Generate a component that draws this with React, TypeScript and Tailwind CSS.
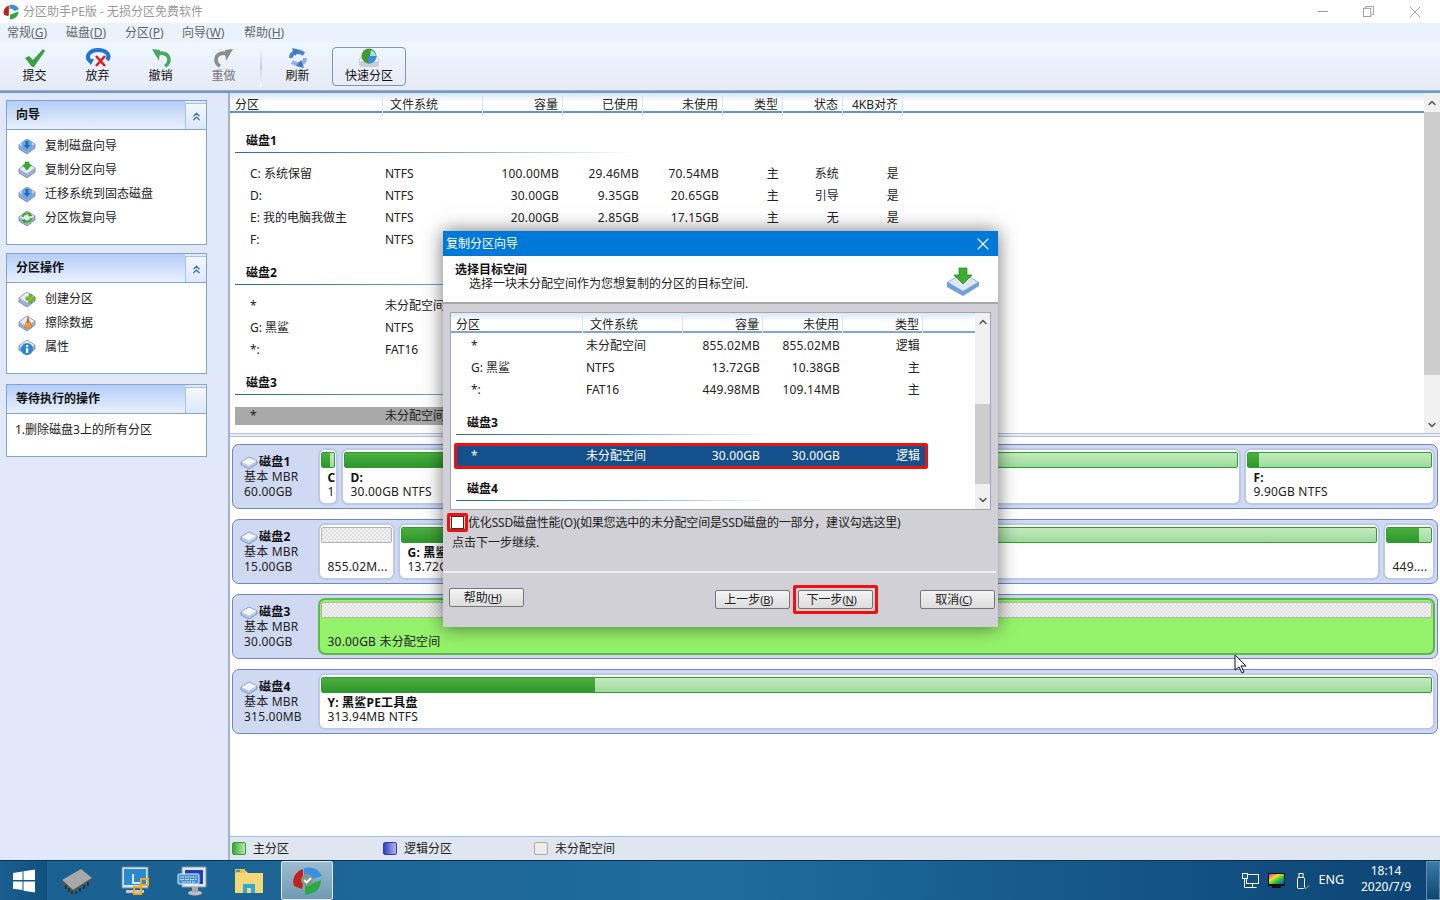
import { ChevronDown, ChevronUp, ChevronsUp, X } from 'lucide-react';
import type { ReactNode } from 'react';

const LIST_COLS = 'grid grid-cols-[148px_100px_80px_80px_80px_60px_60px_60px]';
const DLG_COLS = 'grid grid-cols-[132px_100px_80px_80px_80px]';

const MENU = [
  ['常规', 'G', 'w-[59px]'],
  ['磁盘', 'D', 'w-[59px]'],
  ['分区', 'P', 'w-[57px]'],
  ['向导', 'W', 'w-[62px]'],
  ['帮助', 'H', 'w-[60px]'],
];

function IsoDisk({ children, blue }: { children?: ReactNode; blue?: boolean }) {
  return (
    <svg width="18" height="18" viewBox="0 0 18 18">
      <path d="M1 8 9 2l8 5v4l-8 6-8-5z" fill={blue ? '#8fa8d8' : '#9fb0d0'} stroke="#6f86b8" strokeWidth="0.8" />
      <path d="M1.5 8 9 2.6 16.5 7 9 12.6z" fill="#e8eef8" />
      {children}
    </svg>
  );
}

function DiskDown() {
  return (
    <IsoDisk blue>
      <circle cx="9" cy="8" r="5.5" fill="#6fa8e0" />
      <path d="M7.5 4h3v4h2L9 12 5.5 8h2z" fill="#1f6fc0" />
    </IsoDisk>
  );
}

function DiskGreenArrow() {
  return (
    <IsoDisk>
      <path d="M7 1h4v3h2.5L9 9 4.5 4H7z" fill="#3fae2f" stroke="#1f7f1f" strokeWidth="0.5" />
    </IsoDisk>
  );
}

function DiskRecover() {
  return (
    <IsoDisk>
      <path d="M4.5 8a4.5 4 0 0 1 8-2" fill="none" stroke="#45b035" strokeWidth="2.2" />
      <path d="M13.5 9a4.5 4 0 0 1-8 2" fill="none" stroke="#45b035" strokeWidth="2.2" />
      <path d="M11 3.5 14.5 7 10.5 7.5zM7 14.500 3.500 11 7.500 10.500z" fill="#2f9a25" />
    </IsoDisk>
  );
}

function DiskPlus() {
  return (
    <IsoDisk>
      <path d="M8 7h3V4.500h3V7h3v3h-3v3h-3v-3H8z" fill="#7cc51f" stroke="#4c8f10" strokeWidth="0.6" />
    </IsoDisk>
  );
}

function DiskErase() {
  return (
    <IsoDisk>
      <path d="M10 1l1.500 7h-3z" fill="#b0623a" />
      <path d="M8 8h4.500l1 6H6.500z" fill="#e8a33a" stroke="#a8642a" strokeWidth="0.5" />
    </IsoDisk>
  );
}

function DiskInfo() {
  return (
    <IsoDisk>
      <circle cx="9" cy="11" r="6" fill="#2a86d8" />
      <rect x="8" y="10" width="2.200" height="5" fill="#fff" />
      <rect x="8" y="7" width="2.200" height="2" fill="#fff" />
    </IsoDisk>
  );
}

function SmallDisk() {
  return (
    <svg width="18" height="16" viewBox="0 0 18 16">
      <path d="M1 7 9 2l8 4v3l-8 5-8-4z" fill="#b8c8e8" stroke="#6f86b8" strokeWidth="0.8" />
      <path d="M1.500 7 9 2.600 16.500 6 9 10.500z" fill="#f4f7fc" />
    </svg>
  );
}

function ToolIcon({ kind }: { kind: string }) {
  if (kind === 'check') {
    return (
      <svg width="24" height="20" viewBox="0 0 24 20">
        <path d="M2 10l4-2 4 4L20 1l2 2-11 16h-2z" fill="#3e9f46" />
      </svg>
    );
  }
  if (kind === 'discard') {
    return (
      <svg width="26" height="20" viewBox="0 0 26 20">
        <path d="M5 13C0 8 5 2 13 2s13 5 9 10" fill="none" stroke="#1f74d4" strokeWidth="4" />
        <path d="M1 11h8l-3 6z" fill="#1f74d4" />
        <path d="M11 8l9 10M20 8l-9 10" stroke="#d8201c" strokeWidth="2.600" />
      </svg>
    );
  }
  if (kind === 'undo' || kind === 'redo') {
    const c = kind === 'undo' ? '#47a864' : '#8c8c8c';
    return (
      <svg width="22" height="20" viewBox="0 0 22 20" className={kind === 'redo' ? '-scale-x-100' : ''}>
        <path d="M6 7C12 3 19 6 19 12c0 3-2 5-4 6" fill="none" stroke={c} strokeWidth="3.600" />
        <path d="M2 1l8 1-1 11z" fill={c} />
      </svg>
    );
  }
  if (kind === 'refresh') {
    return (
      <svg width="20" height="20" viewBox="0 0 20 20">
        <path d="M3 10C3 4 10 2 16 6" fill="none" stroke="#4a86d0" strokeWidth="4" />
        <path d="M17 10c0 6-7 8-13 4" fill="none" stroke="#8ab4e4" strokeWidth="4" />
        <path d="M4 0l8 2-5 6zM16 20l-8-2 5-6z" fill="#3f78c4" />
      </svg>
    );
  }
  return (
    <svg width="24" height="20" viewBox="0 0 24 20">
      <path d="M2 11h20v5a3 3 0 0 1-3 3H5a3 3 0 0 1-3-3z" fill="#c9ced8" />
      <path d="M2 12l2-3h16l2 3v2H2z" fill="#eef0f4" stroke="#a8b0bc" strokeWidth="0.5" />
      <circle cx="12" cy="8" r="7.500" fill="#3f9a2f" />
      <path d="M12 8h7.500a7.500 7.500 0 0 1-9 7.300z" fill="#3a8fe0" />
      <path d="M14 2a7.500 7.500 0 0 1 5 6h-6z" fill="#a8d8f4" />
    </svg>
  );
}

function ToolButton({ kind, label, gray }: { kind: string; label: string; gray?: boolean }) {
  return (
    <div className="flex h-[42px] w-[63px] flex-col items-center justify-end pb-[5px]">
      <ToolIcon kind={kind} />
      <span className={`text-[12px] leading-[15px] ${gray ? 'text-[#777]' : 'text-[#111]'}`}>{label}</span>
    </div>
  );
}

function Panel({ title, toggle, h, children }: { title: string; toggle: boolean; h: string; children: ReactNode }) {
  return (
    <div className={`w-[201px] ${h} flex flex-col border border-[#7fa5d8] bg-white`}>
      <div className="flex h-[28px] shrink-0 bg-[#e1e8fa]">
        <div className="flex w-[179px] items-center bg-linear-to-b from-[#b4cdf6] to-[#eaf1fd] pl-[9px] text-[12px] font-bold text-[#111]">
          {title}
        </div>
        <div className="mt-[2px] flex h-[26px] w-[21px] items-center justify-center border-t border-l border-[#a9c3e8] bg-linear-to-b from-[#f4f8fe] to-[#dce8f8]">
          {toggle && <ChevronsUp size={13} strokeWidth={2.200} className="text-[#3a6ea5]" />}
        </div>
      </div>
      <div className="border-t border-[#7fa5d8] text-[12px] text-[#222]">{children}</div>
    </div>
  );
}

function PanelItem({ icon, label }: { icon: ReactNode; label: string }) {
  return (
    <div className="flex h-[24px] items-center pl-[11px]">
      <span className="flex w-[27px] items-center">{icon}</span>
      {label}
    </div>
  );
}

function DiskHead({ label, mt, w }: { label: string; mt: string; w: string }) {
  return (
    <div className={mt}>
      <div className="h-[22px] pl-[11px] text-[12px] leading-[22px] font-bold text-[#111]">{label}</div>
      <div className={`h-px ${w} bg-linear-to-r from-[#2a6aa8] via-[#6f9cc8] to-transparent`} />
    </div>
  );
}

function Row({ cells }: { cells: string[] }) {
  return (
    <div className={`${LIST_COLS} h-[22px] items-center text-[12px] text-[#222]`}>
      <span className="pl-[15px]">{cells[0]}</span>
      <span className="pl-[2px]">{cells[1]}</span>
      {cells.slice(2).map((c, i) => (
        <span key={i} className="pr-[4px] text-right tracking-[0.15px]">{c}</span>
      ))}
    </div>
  );
}

function Bar({ used, kind }: { used: string; kind: 'green' | 'empty' }) {
  if (kind === 'empty') {
    return (
      <div className="mx-px mt-[2px] h-[16px] rounded-[2px] border border-[#b8b2ac] bg-[#e8e8e8] bg-[repeating-conic-gradient(#e2e2e2_0_25%,#f0f0f0_0_50%)] bg-size-[4px_4px]" />
    );
  }
  return (
    <div className="mx-px mt-[2px] h-[16px] overflow-hidden rounded-[2px] border border-[#2f9e2f] bg-linear-to-b from-[#c4ebc0] to-[#9edb9c]">
      <div className={`h-full ${used} bg-linear-to-b from-[#4cb040] to-[#2b972c]`} />
    </div>
  );
}

function Part({ w, used, title, sub, empty, active, grow }: {
  w?: string; used?: string; title?: string; sub?: string; empty?: boolean; active?: boolean; grow?: boolean;
}) {
  return (
    <div
      className={`${grow ? 'min-w-0 flex-1' : w} h-[57px] shrink-0 overflow-hidden rounded-[7px] border-2 ${
        active ? 'border-[#5cb848] bg-[#95f26b]' : 'border-[#bccae8] bg-white'
      }`}
    >
      <Bar used={used ?? 'w-0'} kind={empty ? 'empty' : 'green'} />
      <div className="mt-[3px] pl-[7.500px] text-[12px] leading-[13.5px] tracking-[0.2px] whitespace-nowrap text-[#222]">
        <div className="h-[14px] font-bold text-[#111]">{title}</div>
        <div>{sub}</div>
      </div>
    </div>
  );
}

function DiskCard({ name, size, children }: { name: string; size: string; children: ReactNode }) {
  return (
    <div className="flex h-[65px] w-[1206px] rounded-[7px] border border-[#6f88c5] bg-[#cfdaf2] pt-[3px] pr-[2px]">
      <div className="w-[85px] shrink-0 pt-[7px] pl-[7px] text-[12px] leading-[14.5px] tracking-[0.2px] text-[#222]">
        <div className="flex h-[15px] items-center gap-px font-bold text-[#111]">
          <SmallDisk />
          {name}
        </div>
        <div className="pl-[4px]">基本 MBR</div>
        <div className="pl-[4px]">{size}</div>
      </div>
      <div className="flex min-w-0 flex-1 gap-[3px]">{children}</div>
    </div>
  );
}

function Legend({ color, label, w }: { color: string; label: string; w: string }) {
  return (
    <div className={`flex items-center gap-[7px] ${w}`}>
      <span className={`h-[13px] w-[14px] rounded-[2px] border ${color}`} />
      {label}
    </div>
  );
}

function DlgRow({ cells }: { cells: string[] }) {
  return (
    <div className={`${DLG_COLS} h-[22px] items-center text-[12px] text-[#222]`}>
      <span className="pl-[20px]">{cells[0]}</span>
      <span className="pl-[3px]">{cells[1]}</span>
      {cells.slice(2).map((c, i) => (
        <span key={i} className="pr-[3px] text-right tracking-[0.15px]">{c}</span>
      ))}
    </div>
  );
}

function DlgButton({ label, hot, w = 'w-[75px]' }: { label: string; hot: string; w?: string }) {
  return (
    <div className={`flex h-[19px] ${w} items-center justify-center rounded-[2px] border border-[#777] bg-linear-to-b from-[#f4f4f4] to-[#dcdcdc] pt-px pr-[8px] text-[12px] text-[#222]`}>
      {label}
      <span className="text-[11px] tracking-[-0.4px]">(<span className="underline">{hot}</span>)</span>
    </div>
  );
}

function Dialog() {
  return (
    <div className="absolute top-[231px] left-[443px] flex h-[396px] w-[555px] flex-col bg-[#d0d0d6] shadow-[0_0_18px_rgba(0,0,0,0.55)]">
      <div className="flex h-[25px] shrink-0 items-center justify-between bg-[#0078d7] pr-[5px] pl-[3px] text-[12px] text-white">
        复制分区向导
        <X size={20} strokeWidth={1.300} />
      </div>
      <div className="relative h-[48px] shrink-0 border-b-2 border-[#a8a8a8] bg-white pt-[7px] pl-[12px] text-[12px] leading-[14px] text-[#222]">
        <div className="font-bold text-[#111]">选择目标空间</div>
        <div className="pl-[14px]">选择一块未分配空间作为您想复制的分区的目标空间.</div>
        <div className="absolute top-[11px] right-[18px]">
          <svg width="34" height="30" viewBox="0 0 34 30">
            <path d="M1 15 17 6l16 9v4L17 29 1 20z" fill="#6fa0d8" />
            <path d="M2 15 17 7l15 8-15 9z" fill="#dce8f6" />
            <path d="M13 1h8v7h5l-9 9-9-9h5z" fill="#3fae2f" stroke="#1f7f1f" strokeWidth="0.7" />
          </svg>
        </div>
      </div>

      <div className="mt-[8px] ml-[7px] flex h-[198px] w-[541px] shrink-0 border border-[#a4a4ac] bg-white">
        <div className="min-w-0 flex-1">
          <div className={`${DLG_COLS} h-[20px] items-end border-b-2 border-[#7fa5d8] bg-linear-to-b from-[#dce9f8] via-white to-white text-[12px] leading-[16px] text-[#222]`}>
            <span className="h-full border-r border-[#dbe6f4] pt-[4px] pl-[5px]">分区</span>
            <span className="h-full border-r border-[#dbe6f4] pt-[4px] pl-[7px]">文件系统</span>
            <span className="h-full border-r border-[#dbe6f4] pt-[4px] pr-[3px] text-right">容量</span>
            <span className="h-full border-r border-[#dbe6f4] pt-[4px] pr-[3px] text-right">未使用</span>
            <span className="h-full border-r border-[#dbe6f4] pt-[4px] pr-[3px] text-right">类型</span>
          </div>
          <div className="mt-[2px]">
            <DlgRow cells={['*', '未分配空间', '855.02MB', '855.02MB', '逻辑']} />
            <DlgRow cells={['G:  黑鲨', 'NTFS', '13.72GB', '10.38GB', '主']} />
            <DlgRow cells={['*:', 'FAT16', '449.98MB', '109.14MB', '主']} />
          </div>
          <div className="mt-[11px] ml-[5px] w-[314px]">
            <div className="h-[22px] pl-[11px] text-[12px] leading-[22px] font-bold text-[#111]">磁盘3</div>
            <div className="h-px bg-linear-to-r from-[#2a6aa8] via-[#6f9cc8] to-transparent" />
          </div>
          <div className="mt-[8px] ml-[3px] grid h-[26px] w-[474px] grid-cols-[126px_100px_80px_80px_80px] items-center rounded-[2px] border-[3px] border-[#f01010] bg-[#14508c] text-[12px] text-white">
            <span className="pl-[14px]">*</span>
            <span className="pl-[3px]">未分配空间</span>
            <span className="pr-[3px] text-right tracking-[0.15px]">30.00GB</span>
            <span className="pr-[3px] text-right tracking-[0.15px]">30.00GB</span>
            <span className="pr-[3px] text-right">逻辑</span>
          </div>
          <div className="mt-[9px] ml-[5px] w-[314px]">
            <div className="h-[22px] pl-[11px] text-[12px] leading-[22px] font-bold text-[#111]">磁盘4</div>
            <div className="h-px bg-linear-to-r from-[#2a6aa8] via-[#6f9cc8] to-transparent" />
          </div>
        </div>
        <div className="flex w-[15px] shrink-0 flex-col items-center bg-[#f0f0f0]">
          <div className="flex h-[18px] items-center justify-center">
            <ChevronUp size={12} strokeWidth={3} className="text-[#555]" />
          </div>
          <div className="h-[73px]" />
          <div className="h-[80px] w-full bg-[#cdcdcd]" />
          <div className="flex flex-1 items-end justify-center pb-[3px]">
            <ChevronDown size={12} strokeWidth={3} className="text-[#555]" />
          </div>
        </div>
      </div>

      <div className="mt-[3px] flex h-[19px] shrink-0 items-center pl-[4px] text-[12px] tracking-[-0.17px] text-[#222]">
        <div className="flex h-[19px] w-[21px] shrink-0 items-center justify-center rounded-[2px] border-[3px] border-[#f01010]">
          <div className="h-[13px] w-[13px] border border-[#333] bg-white" />
        </div>
        优化SSD磁盘性能(O)(如果您选中的未分配空间是SSD磁盘的一部分，建议勾选这里)
      </div>
      <div className="mt-[2px] pl-[9px] text-[12px] leading-[18px] text-[#222]">点击下一步继续.</div>
      <div className="mt-[19px] mr-[2px] ml-[1px] h-[2px] bg-[#f0f0f2]" />
      <div className="mt-[12px] flex pl-[6px]">
        <div className="mt-[3px]">
          <DlgButton label="帮助" hot="H" />
        </div>
        <div className="mt-[5px] ml-[191px]">
          <DlgButton label="上一步" hot="B" />
        </div>
        <div className="ml-[3px] flex h-[29px] w-[85px] items-center justify-center rounded-[2px] border-[3px] border-[#f01010]">
          <DlgButton label="下一步" hot="N" />
        </div>
        <div className="mt-[5px] ml-[42px]">
          <DlgButton label="取消" hot="C" />
        </div>
      </div>
    </div>
  );
}

function Tray() {
  return (
    <div className="ml-auto flex h-full items-center text-white">
      <svg width="18" height="16" viewBox="0 0 18 16" className="mr-[8px]" fill="none" stroke="#fff" strokeWidth="1">
        <rect x="4.500" y="1.500" width="12" height="9" />
        <rect x="0.500" y="0.500" width="5" height="5" fill="#1a5f90" />
        <path d="M2.500 5.500v9M2.500 14.500h12M10.500 10.500v4" />
      </svg>
      <svg width="17" height="17" viewBox="0 0 17 17" className="mr-[10px]">
        <defs>
          <linearGradient id="rb" x1="0" y1="0" x2="1" y2="1">
            <stop offset="0" stopColor="#e81ce0" />
            <stop offset="0.35" stopColor="#f0e020" />
            <stop offset="0.65" stopColor="#20c040" />
            <stop offset="1" stopColor="#1040e0" />
          </linearGradient>
        </defs>
        <rect x="0" y="1" width="17" height="13" fill="#111" />
        <rect x="1" y="2" width="15" height="10" fill="url(#rb)" />
        <rect x="4" y="14" width="9" height="2" fill="#111" />
      </svg>
      <svg width="15" height="18" viewBox="0 0 15 18" className="mr-[8px]" fill="none" stroke="#fff" strokeWidth="1">
        <rect x="2.500" y="5.500" width="7" height="11" rx="1" />
        <rect x="4" y="1.500" width="4" height="4" />
        <path d="M9 15l2 1.500 3-3" stroke="#9fb8cc" />
      </svg>
      <span className="mr-[15px] text-[12.500px]">ENG</span>
      <div className="mr-[13px] w-[54px] pb-[3px] text-center text-[12px] leading-[16px]">
        <div>18:14</div>
        <div>2020/7/9</div>
      </div>
      <div className="h-full w-[14px] border border-[#5f8fb0] bg-linear-to-b from-[#3a7ba8] to-[#0e4670]" />
    </div>
  );
}

function TaskIcons() {
  return (
    <>
      <div className="flex h-full w-[47px] items-center justify-center bg-linear-to-r from-[#1a5f90] to-[#10507f]">
        <svg width="24" height="24" viewBox="0 0 24 24" fill="#fff">
          <path d="M1 4l9.500-1.500V11H1zM11.500 2.300 23 .5V11H11.500zM1 12.500h9.500V21L1 19.700zM11.500 12.500H23v11l-11.500-1.700z" />
        </svg>
      </div>
      <div className="flex w-[60px] justify-center">
        <svg width="32" height="28" viewBox="0 0 32 28">
          <path d="M1 13 20 2l11 9-19 12z" fill="#a8a8a8" />
          <path d="M1 13l11 10v3L1 16zM12 23l19-12v2L12 26z" fill="#555" />
          <path d="M5 18v4M8 21v4M11 24v3M15 24v3M19 21v4M23 18v4M27 15v4" stroke="#222" strokeWidth="1.300" />
        </svg>
      </div>
      <div className="flex w-[57px] justify-center">
        <svg width="30" height="30" viewBox="0 0 30 30">
          <rect x="1" y="1" width="26" height="21" fill="#d8e4f0" stroke="#6a8aa8" />
          <rect x="3" y="3" width="22" height="16" fill="#2a8ad0" />
          <path d="M11 8h2v8h6v2h-8z" fill="#fff" opacity="0.8" />
          <rect x="5" y="24" width="18" height="3" fill="#c8c8c8" />
          <rect x="20" y="13" width="7" height="6" fill="none" stroke="#f0a818" strokeWidth="2" />
          <rect x="13" y="21" width="7" height="7" fill="none" stroke="#f0a818" strokeWidth="2" />
        </svg>
      </div>
      <div className="flex w-[56px] justify-center">
        <svg width="30" height="30" viewBox="0 0 30 30">
          <path d="M5 1h24v20H5z" fill="#dfe6ee" stroke="#8a98a8" />
          <path d="M8 4h18v14H8z" fill="#2040b0" />
          <rect x="1" y="8" width="21" height="10" rx="1" fill="#3f8fe0" stroke="#e8f0f8" />
          <path d="M3 11h17M3 13.500h17M5 16h13" stroke="#fff" strokeWidth="1.100" strokeDasharray="1.500 1" />
          <ellipse cx="18" cy="27" rx="7" ry="2.500" fill="#bdbdbd" />
          <rect x="15" y="21" width="6" height="5" fill="#a8a8a8" />
        </svg>
      </div>
      <div className="flex w-[58px] justify-center">
        <svg width="28" height="25" viewBox="0 0 28 25">
          <path d="M0 3h11l2 2h15v20H0z" fill="#f4d878" />
          <path d="M0 1h10v4H0z" fill="#e8c050" />
          <rect x="1" y="2" width="4" height="2" fill="#3a90d8" />
          <path d="M8 25v-9h12v9h-4v-5h-4v5z" fill="#28a8e0" />
        </svg>
      </div>
      <div className="ml-[3px] flex h-[39px] w-[52px] items-center justify-center rounded-[2px] border border-[#dde8f0] bg-linear-to-b from-[#9cbccf] to-[#6f9ab5]">
        <svg width="32" height="30" viewBox="0 0 32 30">
          <path d="M12 3A13 13 0 0 0 3 20l8 3 1-4z" fill="#c4201c" />
          <path d="M13 2c8-2 15 1 18 8l-9 3c-1-3-4-5-9-4z" fill="#3a8fe0" />
          <path d="M14 20l16-6c0 8-5 14-16 15z" fill="#2fa84a" />
          <circle cx="16" cy="14" r="6" fill="#7f9a8a" />
          <path d="M13 14l2.500 2.500L20 12" fill="none" stroke="#fff" strokeWidth="1.800" />
        </svg>
      </div>
    </>
  );
}

export default function App() {
  return (
    <div className="relative flex h-[900px] w-[1440px] flex-col overflow-hidden bg-white font-['Noto_Sans','Noto_Sans_CJK_SC',sans-serif]">
      {/* title bar */}
      <div className="flex h-[23px] shrink-0 items-center bg-white text-[12px] text-[#999]">
        <svg width="18" height="16" viewBox="0 0 32 30" className="mr-[3px] ml-[2px]">
          <path d="M12 3A13 13 0 0 0 3 20l8 3 1-4z" fill="#c4201c" />
          <path d="M13 2c8-2 15 1 18 8l-9 3c-1-3-4-5-9-4z" fill="#3a8fe0" />
          <path d="M14 20l16-6c0 8-5 14-16 15z" fill="#2fa84a" />
        </svg>
        分区助手PE版 - 无损分区免费软件
        <div className="ml-auto flex items-center">
          <span className="mr-[35px] h-px w-[10px] bg-[#999]" />
          <svg width="11" height="11" viewBox="0 0 12 12" fill="none" stroke="#999" className="mr-[31px]">
            <rect x="0.500" y="2.500" width="8" height="9" />
            <path d="M3 2.500V.5h8.500v9H9" />
          </svg>
          <X size={20} strokeWidth={0.900} className="mr-[15px] text-[#888]" />
        </div>
      </div>

      {/* menu */}
      <div className="flex h-[19px] shrink-0 items-center bg-[#eaf3fc] pl-[7px] text-[12px] text-[#666]">
        {MENU.map(([t, k, w]) => (
          <span key={k} className={w}>
            {t}(<span className="underline">{k}</span>)
          </span>
        ))}
      </div>

      {/* toolbar */}
      <div className="flex h-[48px] shrink-0 items-center border-t border-[#f2f2f2] bg-linear-to-b from-[#eef7fe] to-[#e7eaf6] pl-[3px]">
        <ToolButton kind="check" label="提交" />
        <ToolButton kind="discard" label="放弃" />
        <ToolButton kind="undo" label="撤销" />
        <ToolButton kind="redo" label="重做" gray />
        <div className="mr-[4px] ml-[5px] h-[40px] w-[2px] bg-linear-to-b from-[#f8fafd] via-[#c8d0dc] to-[#f8fafd]" />
        <ToolButton kind="refresh" label="刷新" />
        <div className="ml-[3px] flex h-[39px] w-[74px] flex-col items-center justify-end rounded-[4px] border border-[#7e97b4] pb-[2px] text-[12px] leading-[15px] text-[#111]">
          <ToolIcon kind="quick" />
          快速分区
        </div>
      </div>
      <div className="h-[3px] shrink-0 border-b-2 border-[#6a9bd8] bg-[#a8acb4]" />

      {/* main */}
      <div className="flex min-h-0 flex-1">
        <div className="flex w-[230px] shrink-0 flex-col gap-[8px] border-r-2 border-[#a4b0d0] bg-[#e1e8fa] pt-[7px] pl-[6px]">
          <Panel title="向导" toggle h="h-[145px]">
            <div className="pt-[4px]">
              <PanelItem icon={<DiskDown />} label="复制磁盘向导" />
              <PanelItem icon={<DiskGreenArrow />} label="复制分区向导" />
              <PanelItem icon={<DiskDown />} label="迁移系统到固态磁盘" />
              <PanelItem icon={<DiskRecover />} label="分区恢复向导" />
            </div>
          </Panel>
          <Panel title="分区操作" toggle h="h-[121px]">
            <div className="pt-[4px]">
              <PanelItem icon={<DiskPlus />} label="创建分区" />
              <PanelItem icon={<DiskErase />} label="擦除数据" />
              <PanelItem icon={<DiskInfo />} label="属性" />
            </div>
          </Panel>
          <div className="mt-[2px]">
            <Panel title="等待执行的操作" toggle={false} h="h-[73px]">
              <div className="pt-[7px] pl-[8px]">1.删除磁盘3上的所有分区</div>
            </Panel>
          </div>
        </div>

        <div className="flex min-w-0 flex-1 flex-col">
          {/* partition list */}
          <div className="flex h-[340px] shrink-0">
            <div className="min-w-0 flex-1 pl-[5px]">
              <div className="-ml-[5px] border-b-2 border-[#5b95d8] bg-linear-to-b from-[#d8e6f8] via-white to-white pl-[5px]">
                <div className={`${LIST_COLS} h-[18px] text-[12px] leading-[23px] text-[#222]`}>
                  <span className="border-r border-[#dbe6f4]">分区</span>
                  <span className="border-r border-[#dbe6f4] pl-[7px]">文件系统</span>
                  {['容量', '已使用', '未使用', '类型', '状态', '4KB对齐'].map((h) => (
                    <span key={h} className="border-r border-[#dbe6f4] pr-[4px] text-right">{h}</span>
                  ))}
                </div>
              </div>
              <DiskHead label="磁盘1" mt="mt-[17px]" w="w-[400px]" />
              <div className="mt-[10px]">
                <Row cells={['C: 系统保留', 'NTFS', '100.00MB', '29.46MB', '70.54MB', '主', '系统', '是']} />
                <Row cells={['D:', 'NTFS', '30.00GB', '9.35GB', '20.65GB', '主', '引导', '是']} />
                <Row cells={['E: 我的电脑我做主', 'NTFS', '20.00GB', '2.85GB', '17.15GB', '主', '无', '是']} />
                <Row cells={['F:', 'NTFS']} />
              </div>
              <DiskHead label="磁盘2" mt="mt-[11px]" w="w-[400px]" />
              <div className="mt-[10px]">
                <Row cells={['*', '未分配空间']} />
                <Row cells={['G: 黑鲨', 'NTFS']} />
                <Row cells={['*:', 'FAT16']} />
              </div>
              <DiskHead label="磁盘3" mt="mt-[11px]" w="w-[400px]" />
              <div className="mt-[12px] h-[18px] w-[668px] bg-[#a9a9a9]">
                <div className="-translate-y-[2px]">
                  <Row cells={['*', '未分配空间']} />
                </div>
              </div>
            </div>
            <div className="flex w-[16px] shrink-0 flex-col items-center bg-[#f0f0f0]">
              <div className="flex h-[19px] items-center justify-center">
                <ChevronUp size={12} strokeWidth={3} className="text-[#555]" />
              </div>
              <div className="h-[263px] w-full bg-[#cdcdcd]" />
              <div className="flex flex-1 items-end pb-[2px]">
                <ChevronDown size={12} strokeWidth={3} className="text-[#555]" />
              </div>
            </div>
          </div>

          <div className="h-[4px] shrink-0 border-y border-[#b4c0dc] bg-[#e8eefa]" />

          {/* disk map */}
          <div className="flex min-h-0 flex-1 flex-col gap-[10px] bg-white pt-[7px] pl-[2px]">
            <DiskCard name="磁盘1" size="60.00GB">
              <Part w="w-[20px]" used="w-[8px]" title="C" sub="1" />
              <Part w="w-[360px]" used="w-[60%]" title="D:" sub="30.00GB NTFS" />
              <Part grow used="w-[30px]" />
              <Part w="w-[191px]" used="w-[11px]" title="F:" sub="9.90GB NTFS" />
            </DiskCard>
            <DiskCard name="磁盘2" size="15.00GB">
              <Part w="w-[77px]" empty sub="855.02M..." />
              <Part grow used="w-[24%]" title="G: 黑鲨" sub="13.72GB NTFS" />
              <Part w="w-[52px]" used="w-[32px]" sub="449...." />
            </DiskCard>
            <DiskCard name="磁盘3" size="30.00GB">
              <Part grow active empty sub="30.00GB 未分配空间" />
            </DiskCard>
            <DiskCard name="磁盘4" size="315.00MB">
              <Part grow used="w-[273px]" title="Y: 黑鲨PE工具盘" sub="313.94MB NTFS" />
            </DiskCard>
          </div>

          {/* legend */}
          <div className="flex h-[24px] shrink-0 items-center border-t border-[#9fc0e8] bg-[#dfe6f0] pl-[2px] text-[12px] text-[#222]">
            <Legend color="border-[#3a9a3a] bg-linear-to-r from-[#34a834] to-[#b8e8b0]" label="主分区" w="w-[151px]" />
            <Legend color="border-[#3a3ab0] bg-linear-to-r from-[#3a3ac0] to-[#b0b8e8]" label="逻辑分区" w="w-[151px]" />
            <Legend color="border-[#b8a890] bg-[#ececec]" label="未分配空间" w="w-[120px]" />
          </div>
        </div>
      </div>

      {/* taskbar */}
      <div className="flex h-[40px] shrink-0 items-center border-t border-[#0c3050] bg-linear-to-r from-[#1a5f90] via-[#1f6c9e] to-[#0c4474]">
        <TaskIcons />
        <Tray />
      </div>

      <Dialog />

      {/* mouse pointer */}
      <svg width="14" height="20" viewBox="0 0 14 20" className="absolute top-[654px] left-[1234px]">
        <path d="M1 1v15l4-3 3 6 2-1-3-6h5z" fill="#fff" stroke="#111" strokeWidth="1" />
      </svg>
    </div>
  );
}
